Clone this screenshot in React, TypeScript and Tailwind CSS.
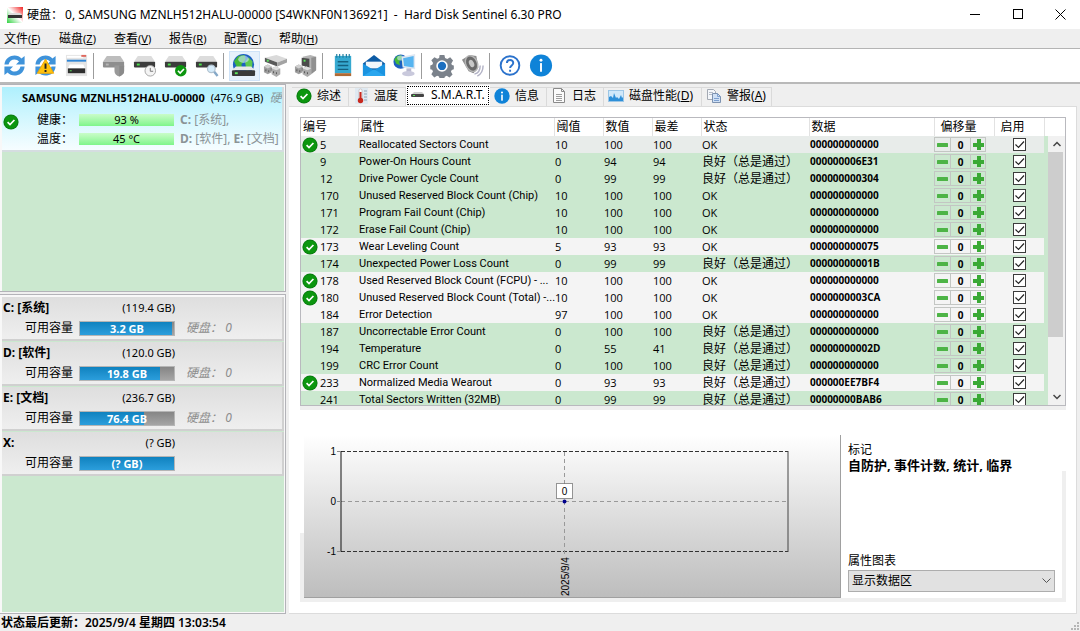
import React, { useState } from "react";

type Attr = {
  id: number;
  name: string;
  threshold: number;
  value: number;
  worst: number;
  status: string;
  data: string;
  badge?: boolean;
  tone: "green" | "light" | "selected";
};

const PASS = "良好（总是通过）";

const attributes: Attr[] = [
  { id: 5, name: "Reallocated Sectors Count", threshold: 10, value: 100, worst: 100, status: "OK", data: "000000000000", badge: true, tone: "selected" },
  { id: 9, name: "Power-On Hours Count", threshold: 0, value: 94, worst: 94, status: PASS, data: "000000006E31", tone: "green" },
  { id: 12, name: "Drive Power Cycle Count", threshold: 0, value: 99, worst: 99, status: PASS, data: "000000000304", tone: "green" },
  { id: 170, name: "Unused Reserved Block Count (Chip)", threshold: 10, value: 100, worst: 100, status: "OK", data: "000000000000", tone: "green" },
  { id: 171, name: "Program Fail Count (Chip)", threshold: 10, value: 100, worst: 100, status: "OK", data: "000000000000", tone: "green" },
  { id: 172, name: "Erase Fail Count (Chip)", threshold: 10, value: 100, worst: 100, status: "OK", data: "000000000000", tone: "green" },
  { id: 173, name: "Wear Leveling Count", threshold: 5, value: 93, worst: 93, status: "OK", data: "000000000075", badge: true, tone: "light" },
  { id: 174, name: "Unexpected Power Loss Count", threshold: 0, value: 99, worst: 99, status: PASS, data: "00000000001B", tone: "green" },
  { id: 178, name: "Used Reserved Block Count (FCPU) - ...", threshold: 10, value: 100, worst: 100, status: "OK", data: "000000000000", badge: true, tone: "light" },
  { id: 180, name: "Unused Reserved Block Count (Total) -...", threshold: 10, value: 100, worst: 100, status: "OK", data: "0000000003CA", badge: true, tone: "light" },
  { id: 184, name: "Error Detection", threshold: 97, value: 100, worst: 100, status: "OK", data: "000000000000", tone: "light" },
  { id: 187, name: "Uncorrectable Error Count", threshold: 0, value: 100, worst: 100, status: PASS, data: "000000000000", tone: "green" },
  { id: 194, name: "Temperature", threshold: 0, value: 55, worst: 41, status: PASS, data: "00000000002D", tone: "green" },
  { id: 199, name: "CRC Error Count", threshold: 0, value: 100, worst: 100, status: PASS, data: "000000000000", tone: "green" },
  { id: 233, name: "Normalized Media Wearout", threshold: 0, value: 93, worst: 93, status: PASS, data: "000000EE7BF4", badge: true, tone: "light" },
  { id: 241, name: "Total Sectors Written (32MB)", threshold: 0, value: 99, worst: 99, status: PASS, data: "00000000BAB6", tone: "green" },
];

const tones = {
  green: "bg-[#cbe8cf]",
  light: "bg-[#f4f4f4]",
  selected: "bg-[#e8ecea]",
};

const volumes = [
  { name: "C: [系统]", size: "(119.4 GB)", free: "3.2 GB", used: 98, disk: true },
  { name: "D: [软件]", size: "(120.0 GB)", free: "19.8 GB", used: 85, disk: true },
  { name: "E: [文档]", size: "(236.7 GB)", free: "76.4 GB", used: 68, disk: true },
  { name: "X:", size: "(? GB)", free: "(? GB)", used: 100, disk: false },
];

const menus = [
  ["文件", "F"],
  ["磁盘", "Z"],
  ["查看", "V"],
  ["报告", "R"],
  ["配置", "C"],
  ["帮助", "H"],
];

/* ---------- icons ---------- */

const CheckBadge = ({ className = "" }: { className?: string }) => (
  <svg viewBox="0 0 16 16" className={`w-4 h-4 shrink-0 ${className}`}>
    <circle cx="8" cy="8" r="7.6" fill="#0b7d12" />
    <circle cx="8" cy="8" r="6.6" fill="#0c960f" />
    <path d="M4.600 8.200l2.400 2.400 4.400-4.600" fill="none" stroke="#fff" strokeWidth="1.700" />
  </svg>
);

const InfoBadge = () => (
  <svg viewBox="0 0 24 24" className="w-4 h-4 shrink-0">
    <circle cx="12" cy="12" r="11.5" fill="#0f83d8" />
    <circle cx="12" cy="6.8" r="1.6" fill="#fff" />
    <rect x="10.8" y="10" width="2.4" height="9" fill="#fff" />
  </svg>
);

const Refresh = () => (
  <>
    <path d="M2.500 12C3 5.500 8.500 2.500 13 2.500c3 0 5.500 1.200 7.200 3.200L23.500 3v9h-9l3.200-3.200C16.500 7.500 15 6.700 13 6.700c-3 0-5.500 2-6.200 5.300z" fill="#3f93da" />
    <path d="M23.500 14c-.5 6.500-6 9.500-10.500 9.500-3 0-5.500-1.200-7.200-3.200L2.500 23v-9h9l-3.200 3.200c1.200 1.300 2.700 2.100 4.700 2.100 3 0 5.500-2 6.200-5.300z" fill="#3f93da" />
  </>
);

// small drive body shared by several toolbar icons
const Drive = () => (
  <>
    <path d="M6 3h14l4 6H2z" fill="#dcdcdc" />
    <rect x="2" y="9" width="22" height="6" rx="1" fill="#3c3c3c" />
    <rect x="5" y="11" width="3" height="2" fill="#4be04b" />
  </>
);

const Globe = ({ cx, cy, r }: { cx: number; cy: number; r: number }) => (
  <>
    <circle cx={cx} cy={cy} r={r} fill="#1c5fc0" />
    <path d={`M${cx - r * 0.9} ${cy - r * 0.3}l${r * 0.4} ${-r * 0.5} ${r * 0.6} ${-r * 0.1} ${r * 0.1} ${r * 0.4} ${-r * 0.4} ${r * 0.5} ${r * 0.1} ${r * 0.5} ${-r * 0.5} ${-r * 0.2}z`} fill="#46b83a" />
    <path d={`M${cx + r * 0.15} ${cy - r * 0.2}l${r * 0.3} ${-r * 0.5} ${r * 0.4} ${r * 0.4} ${-r * 0.05} ${r * 0.7} ${-r * 0.5} ${r * 0.2}z`} fill="#5fc850" />
    <ellipse cx={cx} cy={cy - r * 0.5} rx={r * 0.5} ry={r * 0.35} fill="#cfeaff" opacity=".6" />
  </>
);

// pair of connectors under the "connect" icons
const Plug = () => (
  <>
    <path d="M2 14l4-2 4 2v6l-4 2-4-2z" fill="#9f9f9f" />
    <path d="M2 14l4 2 4-2-4-2z" fill="#d0d0d0" />
    <path d="M9 17h4" stroke="#777" strokeWidth="3" />
    <path d="M10 16l4-2 5 2v6l-4 3-5-3z" fill="#acacac" />
    <path d="M10 16l5 2 4-2-5-2z" fill="#dedede" />
    <path d="M4 17v2M7 18v2M12 19v2M15 20v2" stroke="#555" />
  </>
);

const toolGroups: { label: string; active?: boolean; icon: React.ReactNode }[][] = [
  [
    { label: "Refresh", icon: <Refresh /> },
    {
      label: "Refresh warnings",
      icon: (
        <>
          <Refresh />
          <path d="M13 6.500L21.500 21h-17z" fill="#ffc20e" stroke="#f2a800" strokeLinejoin="round" />
          <path d="M13 11v5.500M13 17.800v2" stroke="#222" strokeWidth="2" />
        </>
      ),
    },
    {
      label: "Panels",
      icon: (
        <>
          <rect x="2" y="2" width="22" height="22" fill="#e4e4e4" />
          <rect x="3" y="3" width="17" height="2" fill="#fff" />
          <rect x="18" y="2" width="5" height="2" fill="#e0685e" />
          <rect x="3" y="7" width="20" height="2" fill="#2f86d6" />
          <path d="M6 12h14l2 4H4z" fill="#fff" />
          <rect x="4" y="16" width="18" height="5" fill="#2e2e2e" />
          <rect x="6" y="18" width="2" height="1" fill="#5ce65c" />
        </>
      ),
    },
  ],
  [
    {
      label: "Disk test",
      icon: (
        <>
          <path d="M6 3h14l4 6H2z" fill="#bdbdbd" />
          <rect x="2" y="9" width="22" height="6" rx="1" fill="#8e8e8e" />
          <rect x="5" y="11" width="3" height="2" fill="#b5b5b5" />
          <path d="M14 13h10v6c0 3-3 4.500-5 5.500-3-1-5-3-5-5.500z" fill="#999" />
          <path d="M19 13h5v6c0 3-3 4.500-5 5.500z" fill="#8a8a8a" />
        </>
      ),
    },
    {
      label: "Scheduled test",
      icon: (
        <>
          <Drive />
          <circle cx="19" cy="18.500" r="5.500" fill="#f4f4f4" stroke="#a5a5a5" />
          <path d="M19 15.500V19h3" fill="none" stroke="#777" />
        </>
      ),
    },
    {
      label: "Short test",
      icon: (
        <>
          <Drive />
          <circle cx="18.500" cy="18.500" r="6" fill="#0c960f" />
          <path d="M15.500 18.500l2.300 2.300 4-4.200" fill="none" stroke="#fff" strokeWidth="1.700" />
        </>
      ),
    },
    {
      label: "Surface test",
      icon: (
        <>
          <Drive />
          <circle cx="18" cy="16.500" r="4" fill="#d5ecfb" stroke="#b3c3d0" strokeWidth="1.300" />
          <path d="M21 19.500l3.500 4.500" stroke="#86a9c8" strokeWidth="2.500" />
        </>
      ),
    },
  ],
  [
    {
      label: "Online disks",
      active: true,
      icon: (
        <>
          <Globe cx={13} cy={12} r={11} />
          <path d="M5 14h16l4 4H1z" fill="#e8e8e8" />
          <rect x="1" y="18" width="24" height="6" rx="1" fill="#3a3a3a" />
          <rect x="4" y="20" width="3" height="2" fill="#5ce65c" />
        </>
      ),
    },
    {
      label: "Connect disk",
      icon: (
        <>
          <path d="M3 5l12-3 11 4-10 4z" fill="#dadada" />
          <path d="M3 5l13 5v4L3 9z" fill="#5a5a5a" />
          <path d="M16 10l10-4v4l-10 4z" fill="#a3a3a3" />
          <rect x="5" y="7" width="2" height="2" fill="#5ce65c" />
          <Plug />
        </>
      ),
    },
    {
      label: "Connect network disk",
      icon: (
        <>
          <path d="M10 4l8-2 6 2v14l-6 4-4-3z" fill="#b5b5b5" />
          <path d="M19 5l5-1v14l-5 4z" fill="#909090" />
          <path d="M9 5l8 1v9l-8-2z" fill="#4b4b4b" />
          <rect x="11" y="7" width="2" height="2" fill="#5ce65c" />
          <Plug />
        </>
      ),
    },
  ],
  [
    {
      label: "Report",
      icon: (
        <>
          <rect x="5" y="3" width="17" height="18" fill="#36a9d0" />
          <rect x="5" y="21" width="17" height="3" fill="#b06a35" />
          <path d="M7 1v4M10 1v4M13.500 1v4M17 1v4M20 1v4" stroke="#1d7c9f" strokeWidth="1.200" />
          <path d="M8 9h11M8 13h11M8 17h11" stroke="#14607f" strokeWidth="1.500" />
        </>
      ),
    },
    {
      label: "Send mail",
      icon: (
        <>
          <path d="M2 11L13.500 2 25 11v13H2z" fill="#0d5ba5" />
          <path d="M5 9h17v7H5z" fill="#f1f6fb" />
          <path d="M2 11l11.500 7L25 11v13H2z" fill="#1a93e0" />
          <path d="M2 24l11.500-7L25 24z" fill="#2aa6ee" />
        </>
      ),
    },
    {
      label: "Network",
      icon: (
        <>
          <Globe cx={9} cy={9} r={7.5} />
          <path d="M10 4l14-3v16l-13-2z" fill="#dfe7f2" />
          <path d="M11.500 5.500l11-2.300v12l-10-1.700z" fill="#56b4f0" />
          <path d="M15 16h5v4h-5z" fill="#b9b9cf" />
          <ellipse cx="17" cy="21.500" rx="6.500" ry="2.800" fill="#c9c9dc" />
        </>
      ),
    },
  ],
  [
    {
      label: "Settings",
      icon: (
        <>
          <path
            d="M11 2h5l.7 3.300 2.300 1 3-1.800 3 3.400-1.800 3 .6 1.600 2 .5v4l-2.200.6-.8 1.900 1.700 2.800-3.200 3.200-2.900-1.800-2 .9-.7 2.900h-4.500l-.8-3-2-.9-2.900 1.800-3.100-3.200 1.700-2.900-.8-1.900-2-.5v-4l2.100-.6.8-2-1.800-2.800 3.200-3.100 2.900 1.700 2-.8z"
            fill="#7b828b"
          />
          <circle cx="13.500" cy="13.500" r="6" fill="#fff" />
          <circle cx="13.500" cy="13.500" r="4.300" fill="#1c6fc0" />
        </>
      ),
    },
    {
      label: "Sound",
      icon: (
        <>
          <path d="M2 7l8-5 7 1 2 12-5 6-5-2z" fill="#8c8c8c" />
          <ellipse cx="12" cy="11" rx="6" ry="8.500" fill="#6a6a6a" stroke="#b5b5b5" strokeWidth="1.500" transform="rotate(-25 12 11)" />
          <ellipse cx="12" cy="11" rx="2.500" ry="4" fill="#c8c8c8" transform="rotate(-25 12 11)" />
          <path d="M15 22c4-1 6-4 6-9M18 24c4-2 6-6 6-11" fill="none" stroke="#b3b3c6" strokeWidth="1.500" />
        </>
      ),
    },
  ],
  [
    {
      label: "Help",
      icon: (
        <>
          <circle cx="13.500" cy="13" r="9.700" fill="#fff" stroke="#2b72cc" strokeWidth="2" />
          <path d="M10.300 10.500c0-4.300 6.600-4.300 6.600 0 0 2.300-3.300 2.500-3.300 5M13.600 17.500v2" fill="none" stroke="#2b72cc" strokeWidth="2" />
        </>
      ),
    },
    {
      label: "About",
      icon: (
        <>
          <circle cx="13.500" cy="13" r="11.500" fill="#0f83d8" />
          <circle cx="13.500" cy="7.500" r="1.500" fill="#fff" />
          <rect x="12.500" y="10.500" width="2" height="9" fill="#fff" />
        </>
      ),
    },
  ],
];

const ThermoIcon = () => (
  <svg viewBox="0 0 16 16" className="w-4 h-4 shrink-0">
    <rect x="2" y="0" width="13" height="16" fill="#dfe9f1" />
    <path d="M11 3h3M11 6h3M11 9h3M11 12h3" stroke="#8fa3b3" />
    <rect x="6" y="1" width="3" height="11" rx="1.500" fill="#fff" stroke="#b9a9a9" strokeWidth=".6" />
    <rect x="6.500" y="4" width="2" height="8" fill="#c8281e" />
    <circle cx="7.500" cy="12.500" r="2.700" fill="#c8281e" />
  </svg>
);

const DriveIcon = () => (
  <svg viewBox="0 0 16 16" className="w-4 h-4 shrink-0">
    <path d="M4 5h8l2 2H2z" fill="#cfcfcf" />
    <rect x="1" y="7" width="13" height="3" rx="1" fill="#444" />
    <rect x="3" y="8" width="2" height="1" fill="#5ce65c" />
  </svg>
);

const PageIcon = () => (
  <svg viewBox="0 0 16 16" className="w-4 h-4 shrink-0">
    <path d="M2.500.500h8l3 3v11h-11z" fill="#fbfbfb" stroke="#8a8a8a" />
    <path d="M10.500.500v3h3" fill="none" stroke="#8a8a8a" />
    <path d="M5 6.500h6M5 8.500h6M5 10.500h6M5 12.500h6" stroke="#9d9d9d" />
  </svg>
);

const PerfIcon = () => (
  <svg viewBox="0 0 16 16" className="w-4 h-4 shrink-0">
    <rect x=".5" y="2.500" width="15" height="11" fill="#cfe8fa" stroke="#9cc6e6" />
    <path d="M1 13V9l2-1 2 2 1-5 2 5 1-1 2 2 2-4 1 3 1-1v4z" fill="#2d8fd8" />
  </svg>
);

const CopyIcon = () => (
  <svg viewBox="0 0 16 16" className="w-4 h-4 shrink-0">
    <path d="M1.500 1.500h6l2 2v8h-8z" fill="#f3f6fa" stroke="#a3a9b3" />
    <path d="M3 4.500h4M3 6.500h3" stroke="#b5bcc8" />
    <path d="M6.500 5.500h5l3 3v6h-8z" fill="#cfe0f5" stroke="#7d92b0" />
    <path d="M11.500 5.500v3h3M8 10.500h5M8 12.500h5" fill="none" stroke="#7da0d0" />
  </svg>
);

const tabs = [
  { label: "综述", icon: <CheckBadge />, width: "w-[57px]" },
  { label: "温度", icon: <ThermoIcon />, width: "w-[57px]" },
  { label: "S.M.A.R.T.", icon: <DriveIcon />, width: "w-[84px]" },
  { label: "信息", icon: <InfoBadge />, width: "w-[57px]" },
  { label: "日志", icon: <PageIcon />, width: "w-[57px]" },
  { label: "磁盘性能", hotkey: "D", icon: <PerfIcon />, width: "w-[98px]" },
  { label: "警报", hotkey: "A", icon: <CopyIcon />, width: "w-[70px]" },
];

/* ---------- window parts ---------- */

const TitleBar = () => (
  <header className="h-[29px] shrink-0 flex items-center bg-white pl-[7px] text-[12px]">
    <svg viewBox="0 0 16 16" className="w-4 h-4 mr-1 shrink-0">
      <defs>
        <linearGradient id="logo" x1="0" y1="1" x2="1" y2="0">
          <stop offset="0" stopColor="#2fd23f" />
          <stop offset=".5" stopColor="#fff" />
          <stop offset="1" stopColor="#f02020" />
        </linearGradient>
      </defs>
      <rect width="16" height="16" fill="url(#logo)" />
      <path d="M3 6h10l2 2H1z" fill="#ddd" />
      <rect x="1" y="8" width="14" height="3" fill="#333" />
    </svg>
    <span>硬盘：</span>
    <h1 className="flex-1 whitespace-pre ml-[2px]">
      0, SAMSUNG MZNLH512HALU-00000 [S4WKNF0N136921]{"  -  "}Hard Disk Sentinel 6.30 PRO
    </h1>
    <div className="flex gap-px">
      <button aria-label="Minimize" className="w-[42px] h-[28px] grid place-items-center">
        <svg viewBox="0 0 11 11" className="w-[11px] h-[11px]">
          <path d="M0 5.500h10" stroke="#000" />
        </svg>
      </button>
      <button aria-label="Maximize" className="w-[42px] h-[28px] grid place-items-center">
        <svg viewBox="0 0 11 11" className="w-[11px] h-[11px]">
          <rect x=".5" y=".5" width="9" height="9" fill="none" stroke="#000" />
        </svg>
      </button>
      <button aria-label="Close" className="w-10 h-[28px] grid place-items-center">
        <svg viewBox="0 0 11 11" className="w-[11px] h-[11px]">
          <path d="M.5.5l10 10M10.500.5l-10 10" stroke="#000" />
        </svg>
      </button>
    </div>
  </header>
);

const MenuBar = () => (
  <nav className="h-[19px] shrink-0 flex items-center bg-[#efefef] pl-1 gap-[18px] text-[12px] leading-4">
    {menus.map(([label, key]) => (
      <button key={key} className="whitespace-nowrap text-left w-[37px]">
        {label}
        <span className="text-[11px]">
          (<u>{key}</u>)
        </span>
      </button>
    ))}
  </nav>
);

const ToolBar = () => (
  <div className="h-[34px] shrink-0 flex items-center bg-white border-t border-[#b4b4b4]">
    {toolGroups.map((group, i) => (
      <React.Fragment key={i}>
        {i > 0 && (
          <div className="w-[6px]">
            <div className="w-px h-[26px] bg-[#9c9c9c]" />
          </div>
        )}
        {group.map((tool) => (
          <button
            key={tool.label}
            aria-label={tool.label}
            className={`w-[31px] h-[30px] flex items-center justify-center pr-px ${
              tool.active ? "bg-[#e6f1fc] border border-[#cfe3f8]" : ""
            }`}
          >
            <svg viewBox="0 0 27 26" className="w-[26px] h-[25px] shrink-0">
              {tool.icon}
            </svg>
          </button>
        ))}
      </React.Fragment>
    ))}
  </div>
);

const Meter = ({ text }: { text: string }) => (
  <div className="w-[95px] h-3 flex items-center justify-center text-[11px] leading-3 bg-linear-to-b from-[#c9fcc9] to-[#7ef58a]">
    {text}
  </div>
);

const DiskCard = () => (
  <div className="h-[65px] border-b-2 border-r-2 border-[#d5dde0] bg-linear-to-b from-[#aef0fd] to-[#f6fdff] text-[12px] pt-[3px]">
    <div className="flex items-center gap-[6px] pl-5 leading-4 whitespace-nowrap overflow-hidden">
      <b className="text-[11px]">SAMSUNG MZNLH512HALU-00000</b>
      <span className="text-[11px]">(476.9 GB)</span>
      <i className="text-[#8a9a9e]">硬</i>
    </div>
    <div className="flex items-start pt-1">
      <CheckBadge className="ml-px mt-1" />
      <div className="pl-[18px] w-[60px] leading-[19px]">
        <p>健康：</p>
        <p>温度：</p>
      </div>
      <div className="flex flex-col gap-[7px] pt-1">
        <Meter text="93 %" />
        <Meter text="45 °C" />
      </div>
      <div className="pl-[6px] text-[#8b9396] whitespace-nowrap leading-[19px]">
        <p>
          <b>C:</b> [系统],
        </p>
        <p>
          <b>D:</b> [软件], <b>E:</b> [文档]
        </p>
      </div>
    </div>
  </div>
);

const VolumeCard = ({ volume }: { volume: (typeof volumes)[number] }) => (
  <div className="h-11 mb-px border-b-2 border-r-2 border-[#d0d0d0] bg-linear-to-b from-[#dedede] to-[#efefef] text-[12px] pt-[3px]">
    <div className="flex justify-between w-[173px] leading-4 pl-px">
      <b>{volume.name}</b>
      <span className="text-[11px]">{volume.size}</span>
    </div>
    <div className="flex items-center pt-1 leading-4">
      <span className="w-[77px] pl-[23px] whitespace-nowrap">可用容量</span>
      <div className="relative w-[96px] h-[15px] border border-[#b5b5b5] bg-linear-to-b from-[#858585] to-[#a5a5a5]">
        <div
          className="h-full bg-linear-to-b from-[#0e82bf] to-[#2b9edc]"
          style={{ width: `${volume.used}%` }}
        />
        <b className="absolute inset-0 text-center text-white text-[11px] leading-[13px]">{volume.free}</b>
      </div>
      {volume.disk && (
        <i className="pl-[11px] text-[#8d8d8d] whitespace-pre">硬盘：{" "}0</i>
      )}
    </div>
  </div>
);

const SidePanel = () => (
  <aside className="w-[287px] shrink-0 flex flex-col bg-[#efefef]">
    <section className="h-[208px] shrink-0 pl-[2px] pt-[2px] pr-px border-t border-b border-r border-[#b3b3b8] mr-px bg-[#f8f8f8]">
      <div className="h-full bg-[#cbe8cf]">
        <DiskCard />
      </div>
    </section>
    <section className="flex-1 mt-[2px] pl-[2px] pt-[2px] pr-px pb-px border-t border-b border-r border-[#b3b3b8] mr-px bg-[#f8f8f8]">
      <div className="h-full bg-[#cbe8cf]">
        {volumes.map((v) => (
          <VolumeCard key={v.name} volume={v} />
        ))}
      </div>
    </section>
  </aside>
);

const TabStrip = () => {
  const [active, setActive] = useState("S.M.A.R.T.");
  return (
    <div role="tablist" className="flex items-end h-[22px] shrink-0 pl-[3px] text-[12px]">
      {tabs.map((tab) => (
        <button
          key={tab.label}
          role="tab"
          aria-selected={active === tab.label}
          onClick={() => setActive(tab.label)}
          className={`${tab.width} flex items-center gap-[5px] pl-[4px] pb-[2px] whitespace-nowrap leading-4 ${
            active === tab.label
              ? "h-[21px] bg-white outline-1 -outline-offset-2 outline-dotted outline-black"
              : "h-[19px] bg-[#f0f0f0] border-t border-r border-[#dadada]"
          }`}
        >
          {tab.icon}
          <span>
            {tab.label}
            {tab.hotkey && (
              <span>
                (<u>{tab.hotkey}</u>)
              </span>
            )}
          </span>
        </button>
      ))}
    </div>
  );
};

const OffsetControl = () => (
  <div className="flex w-[52px] h-[15px] border border-[#c3c6c3]">
    <button aria-label="Decrease" className="w-[15px] grid place-items-center">
      <svg viewBox="0 0 11 11" className="w-[11px] h-[11px]">
        <rect y="4" width="11" height="4" rx=".5" fill="#4db446" />
      </svg>
    </button>
    <span className="flex-1 border-x border-[#c3c6c3] text-center font-bold text-[10px] leading-[14px]">0</span>
    <button aria-label="Increase" className="w-[14px] grid place-items-center">
      <svg viewBox="0 0 11 11" className="w-[11px] h-[11px]">
        <path d="M4 0h4v4h3v4H8v3H4V8H0V4h4z" fill="#3aa935" />
      </svg>
    </button>
  </div>
);

const EnableBox = ({ label }: { label: string }) => (
  <label className="inline-grid align-top mt-[2px]">
    <input
      type="checkbox"
      aria-label={label}
      defaultChecked
      className="peer appearance-none row-start-1 col-start-1 w-[13px] h-[13px] border border-[#3c3c3c] bg-white"
    />
    <svg viewBox="0 0 13 13" className="row-start-1 col-start-1 w-[13px] h-[13px] pointer-events-none invisible peer-checked:visible">
      <path d="M2.500 6.500l3 3 5.500-6" fill="none" stroke="#222" strokeWidth="1.200" />
    </svg>
  </label>
);

const columns = [
  { label: "编号", width: "w-[57px]" },
  { label: "属性", width: "" },
  { label: "阈值", width: "w-[49px]" },
  { label: "数值", width: "w-[49px]" },
  { label: "最差", width: "w-[49px]" },
  { label: "状态", width: "w-[108px]" },
  { label: "数据", width: "w-[125px]" },
  { label: "偏移量", width: "w-[60px]" },
  { label: "启用", width: "w-[50px]" },
];

const AttributeTable = () => (
  <div className="flex-1 min-h-0 flex border border-[#b9b9be] overflow-hidden bg-[#cbe8cf]">
    <div className="flex-1 min-w-0 overflow-hidden">
      <table className="w-full table-fixed border-collapse text-[11px] font-['Open_Sans','Noto_Sans_CJK_SC',sans-serif]">
        <thead>
          <tr className="h-[18px] bg-white">
            {columns.map((c, i) => (
              <th
                key={c.label}
                className={`${c.width} p-0 text-left font-normal text-[12px] leading-4 border-r border-[#e2e2e2] ${
                  i > 6 ? "pl-[6px]" : "pl-[2px]"
                }`}
              >
                {c.label}
              </th>
            ))}
            <th className="w-1 p-0" />
          </tr>
        </thead>
        <tbody className="leading-[17px] whitespace-nowrap">
          {attributes.map((a) => (
            <tr key={a.id} className="h-[17px]">
              <td className={`p-0 ${tones[a.tone]}`}>
                <div className="flex items-center h-[17px]">
                  <span className="w-[19px] pl-px">{a.badge && <CheckBadge />}</span>
                  {a.id}
                </div>
              </td>
              <td className={`p-0 pl-px font-['Roboto',sans-serif] ${tones[a.tone]}`}>{a.name}</td>
              <td className={`p-0 pl-px ${tones[a.tone]}`}>{a.threshold}</td>
              <td className={`p-0 pl-px ${tones[a.tone]}`}>{a.value}</td>
              <td className={`p-0 pl-px ${tones[a.tone]}`}>{a.worst}</td>
              <td className={`p-0 pl-px ${tones[a.tone]}`}>
                <span className={a.status === "OK" ? "" : "text-[12px]"}>{a.status}</span>
              </td>
              <td className={`p-0 pl-px font-bold text-[10px] ${tones[a.tone]}`}>{a.data}</td>
              <td className={`p-0 ${tones[a.tone]}`}>
                <OffsetControl />
              </td>
              <td className={`p-0 text-center align-top ${tones[a.tone]}`}>
                <EnableBox label={a.name} />
              </td>
              <td className="p-0" />
            </tr>
          ))}
        </tbody>
      </table>
    </div>
    <div className="w-[17px] shrink-0 flex flex-col bg-[#f1f1f1] border-t-[18px] border-white">
      <button aria-label="Scroll up" className="h-4 grid place-items-center">
        <svg viewBox="0 0 8 6" className="w-2 h-[6px]">
          <path d="M.5 5L4 1.500 7.500 5" fill="none" stroke="#444" strokeWidth="1.500" />
        </svg>
      </button>
      <div className="flex-1 flex flex-col">
        <div className="h-[78%] w-[15px] bg-[#cdcdcd]" />
      </div>
      <button aria-label="Scroll down" className="h-4 grid place-items-center">
        <svg viewBox="0 0 8 6" className="w-2 h-[6px]">
          <path d="M.5 1L4 4.500 7.500 1" fill="none" stroke="#444" strokeWidth="1.500" />
        </svg>
      </button>
    </div>
  </div>
);

const Chart = () => (
  <div className="flex-1 h-[163px] pl-[37px] pr-[52px] pt-4 bg-linear-to-b from-white to-[#bdbdbd] border-r border-b border-[#a0a0a0]">
    <svg className="block w-full h-[101px] overflow-visible font-['Liberation_Sans',sans-serif] text-[10px]">
      <line x1="0" x2="100%" y1=".5" y2=".5" stroke="#333" strokeDasharray="4 2" />
      <line x1="0" x2="100%" y1="100.5" y2="100.5" stroke="#333" strokeDasharray="4 2" />
      <line x1="0" x2="100%" y1="50.5" y2="50.5" stroke="#999" strokeDasharray="4 3" />
      <line x1="50%" x2="50%" y1="1" y2="105" stroke="#999" strokeDasharray="4 3" />
      <line x1="0" x2="0" y1="0" y2="101" stroke="#111" />
      <line x1="100%" x2="100%" y1="0" y2="101" stroke="#444" />
      <path d="M-4 .5h4M-4 50.500h4M-4 100.500h4" stroke="#888" />
      <text x="-5" y="4" textAnchor="end">1</text>
      <text x="-5" y="54" textAnchor="end">0</text>
      <text x="-5" y="104" textAnchor="end">-1</text>
      <svg x="50%" y="0" className="overflow-visible">
        <rect x="-8" y="32.5" width="16" height="15" fill="#fff" stroke="#333" strokeDasharray="1 1" />
        <text x="0" y="44" textAnchor="middle">0</text>
        <circle cx="0" cy="50.5" r="2" fill="#00008b" />
        <text x="-145" y="4" transform="rotate(-90)">2025/9/4</text>
      </svg>
    </svg>
  </div>
);

const DetailPanel = () => (
  <div className="shrink-0 h-[192px] flex items-end">
    <div className="w-1 h-[69px] bg-[#efefef]" />
    <div className="flex-1 h-full flex flex-col justify-end">
      <div className="flex items-stretch h-[163px]">
        <Chart />
        <div className="w-[221px] flex flex-col pl-[7px] pr-[7px] pt-1 text-[12px] leading-4">
          <p className="pt-[3px]">标记</p>
          <b className="text-[13px] leading-[15px] whitespace-nowrap">自防护, 事件计数, 统计, 临界</b>
          <label htmlFor="graph" className="mt-auto pt-1">
            属性图表
          </label>
          <div className="grid items-center mt-px mb-[6px]">
            <select
              id="graph"
              className="appearance-none row-start-1 col-start-1 h-[22px] pl-[3px] bg-[#e1e1e1] border border-[#adadad]"
            >
              <option>显示数据区</option>
            </select>
            <svg viewBox="0 0 9 6" className="row-start-1 col-start-1 justify-self-end mr-1 w-[9px] h-[6px] pointer-events-none">
              <path d="M.5.5l4 4 4-4" fill="none" stroke="#555" />
            </svg>
          </div>
        </div>
      </div>
      <div className="h-1 bg-[#efefef]" />
    </div>
    <div className="w-1 h-[131px] bg-[#efefef]" />
  </div>
);

const App = () => {
  return (
    <div className="h-screen flex flex-col overflow-hidden bg-[#efefef] text-black font-['Noto_Sans','Noto_Sans_CJK_SC',sans-serif]">
      <TitleBar />
      <MenuBar />
      <ToolBar />
      <main className="flex-1 min-h-0 flex border-t-2 border-[#b9b9b9]">
        <SidePanel />
        <div className="flex-1 min-w-0 flex flex-col pl-[2px] pr-[3px]">
          <TabStrip />
          <div className="flex-1 min-h-0 flex flex-col bg-white border-t border-r border-b border-[#dcdcdc] pt-[10px] pl-[11px] pr-[10px] pb-[11px]">
            <AttributeTable />
            <div className="h-1 shrink-0 bg-[#efefef]" />
            <DetailPanel />
          </div>
        </div>
      </main>
      <footer className="h-[17px] shrink-0 flex items-center justify-between pl-px text-[12px] leading-4">
        <b className="font-semibold">状态最后更新：2025/9/4 星期四 13:03:54</b>
        <svg viewBox="0 0 9 9" className="w-[9px] h-[9px] self-end">
          <path d="M6 0h2v2H6zM3 3h2v2H3zM6 3h2v2H6zM0 6h2v2H0zM3 6h2v2H3zM6 6h2v2H6z" fill="#b5b5b5" />
        </svg>
      </footer>
    </div>
  );
};

export default App;
